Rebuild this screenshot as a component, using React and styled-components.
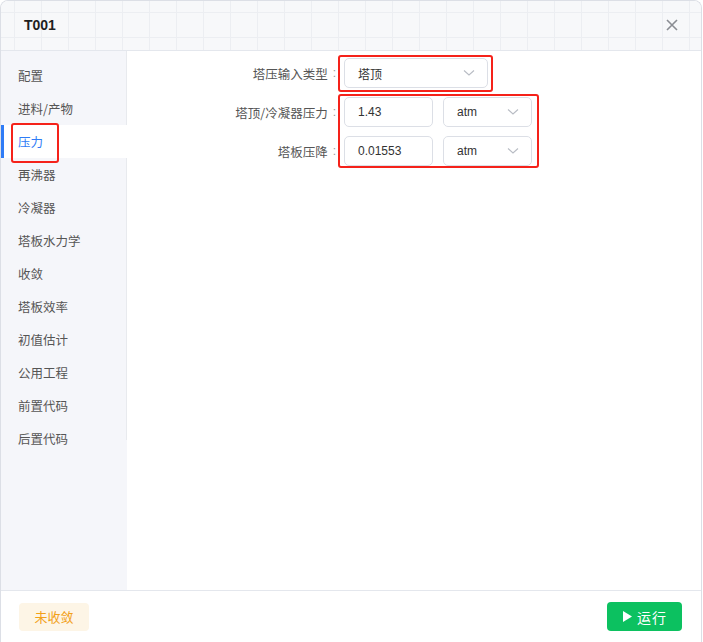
import React from "react";
import styled, { createGlobalStyle } from "styled-components";

const Global = createGlobalStyle`
  html, body { margin: 0; padding: 0; background: #fff; }
  body { font-family: "Noto Sans CJK SC", "Liberation Sans", sans-serif; }
  * { box-sizing: border-box; }
`;

const Dialog = styled.div`
  width: 702px;
  height: 642px;
  border: 1px solid #dcdfe6;
  border-bottom: none;
  border-radius: 8px 8px 0 0;
  display: flex;
  flex-direction: column;
  overflow: hidden;
  background: #fff;
`;

const Header = styled.div`
  height: 50px;
  flex: none;
  display: flex;
  align-items: center;
  justify-content: space-between;
  padding: 0 22px 2px 23px;
  border-bottom: 1px solid #e4e7ed;
  background-color: #f7f8fa;
  background-image:
    linear-gradient(to right, #eceef2 1px, transparent 1px),
    linear-gradient(to bottom, #eceef2 1px, transparent 1px);
  background-size: 27px 25px;
  background-position: 13px 11px;
`;

const Title = styled.div`
  font-family: "Liberation Sans", sans-serif;
  font-weight: bold;
  font-size: 14px;
  color: #1f1f1f;
`;

const Close = styled.button`
  border: none;
  background: none;
  padding: 0;
  width: 14px;
  height: 14px;
  display: flex;
  cursor: pointer;
`;

const Body = styled.div`
  flex: 1;
  display: flex;
  min-height: 0;
`;

const Sidebar = styled.div`
  width: 126px;
  flex: none;
  background: #f5f6fa;
`;

const Menu = styled.ul`
  list-style: none;
  margin: 0;
  padding: 8px 0 0;
  height: 389px;
  border-right: 1px solid #e8eaee;
`;

const Item = styled.li`
  position: relative;
  height: 33px;
  line-height: 33px;
  padding-left: 17px;
  font-size: 12.5px;
  color: ${p => (p.$active ? "#2f7cf6" : "#555")};
  background: ${p => (p.$active ? "#fff" : "transparent")};
  margin-right: ${p => (p.$active ? "-1px" : "0")};
  &::before {
    content: "";
    display: ${p => (p.$active ? "block" : "none")};
    position: absolute;
    left: 0;
    top: 0;
    bottom: 0;
    width: 3px;
    background: #2f7cf6;
  }
`;

const Mark = styled.span`
  position: absolute;
  border: 2.5px solid #f5221a;
  border-radius: 3px;
  pointer-events: none;
`;

const Content = styled.div`
  flex: 1;
  padding-top: 7px;
  position: relative;
`;

const Form = styled.div`
  display: grid;
  grid-template-columns: 217px auto;
  row-gap: 9px;
  column-gap: 0;
  align-items: center;
`;

const Label = styled.div`
  display: flex;
  justify-content: flex-end;
  align-items: center;
  font-size: 12.5px;
  color: #555;
  padding-right: 8px;
  white-space: nowrap;
`;

const Colon = styled.span`
  font-family: "Liberation Sans", sans-serif;
  color: #999;
  margin-left: 5px;
  font-size: 12px;
`;

const Controls = styled.div`
  display: flex;
  gap: 10px;
`;

const Field = styled.div`
  width: ${p => p.$w}px;
  height: 30px;
  border: 1px solid #dcdfe6;
  border-radius: 5px;
  display: flex;
  align-items: center;
  justify-content: space-between;
  padding: 0 12px 0 13px;
  font-size: 12px;
  color: #333;
  font-family: "Liberation Sans", "Noto Sans CJK SC", sans-serif;
  background: #fff;
`;

const Footer = styled.div`
  height: 52px;
  flex: none;
  border-top: 1px solid #e4e7ed;
  display: flex;
  align-items: center;
  justify-content: space-between;
  padding: 0 19px 0 18px;
`;

const Tag = styled.div`
  width: 70px;
  height: 28px;
  border-radius: 4px;
  background: #fdf5e6;
  color: #f2a119;
  font-size: 13px;
  display: flex;
  align-items: center;
  justify-content: center;
`;

const RunButton = styled.button`
  width: 75px;
  height: 29px;
  border: none;
  border-radius: 4px;
  background: #0cc160;
  color: #fff;
  font-size: 14px;
  font-family: "Noto Sans CJK SC", sans-serif;
  display: flex;
  align-items: center;
  justify-content: center;
  gap: 4px;
  letter-spacing: 1px;
`;

const Chevron = () => (
  <svg width="12" height="8" viewBox="0 0 12 8" fill="none">
    <path d="M1 1.5l5 4.5 5-4.5" stroke="#b8bcc4" strokeWidth="1.1" />
  </svg>
);

const items = ["配置", "进料/产物", "压力", "再沸器", "冷凝器", "塔板水力学", "收敛", "塔板效率", "初值估计", "公用工程", "前置代码", "后置代码"];

export default function App() {
  return (
    <>
      <Global />
      <Dialog>
        <Header>
          <Title>T001</Title>
          <Close aria-label="close">
            <svg width="14" height="14" viewBox="0 0 14 14">
              <path d="M2 2l10 10M12 2L2 12" stroke="#8a8d93" strokeWidth="1.6" />
            </svg>
          </Close>
        </Header>
        <Body>
          <Sidebar>
            <Menu>
              {items.map(t => (
                <Item key={t} $active={t === "压力"}>
                  {t}
                  {t === "压力" && <Mark style={{ left: 10, top: -2, width: 48, height: 40 }} />}
                </Item>
              ))}
            </Menu>
          </Sidebar>
          <Content>
            <Form>
              <Label>塔压输入类型<Colon>:</Colon></Label>
              <Controls>
                <Field $w={144}>
                  <span style={{ fontFamily: '"Noto Sans CJK SC", sans-serif' }}>塔顶</span>
                  <Chevron />
                </Field>
              </Controls>
              <Label>塔顶/冷凝器压力<Colon>:</Colon></Label>
              <Controls>
                <Field $w={89}>1.43</Field>
                <Field $w={89}>atm<Chevron /></Field>
              </Controls>
              <Label>塔板压降<Colon>:</Colon></Label>
              <Controls>
                <Field $w={89}>0.01553</Field>
                <Field $w={89}>atm<Chevron /></Field>
              </Controls>
            </Form>
            <Mark style={{ left: 211, top: 4, width: 155, height: 37 }} />
            <Mark style={{ left: 211, top: 43, width: 201, height: 74 }} />
          </Content>
        </Body>
        <Footer>
          <Tag>未收敛</Tag>
          <RunButton>
            <svg width="11" height="13" viewBox="0 0 11 13">
              <path d="M1 1l9 5.5L1 12z" fill="#fff" />
            </svg>
            运行
          </RunButton>
        </Footer>
      </Dialog>
    </>
  );
}
